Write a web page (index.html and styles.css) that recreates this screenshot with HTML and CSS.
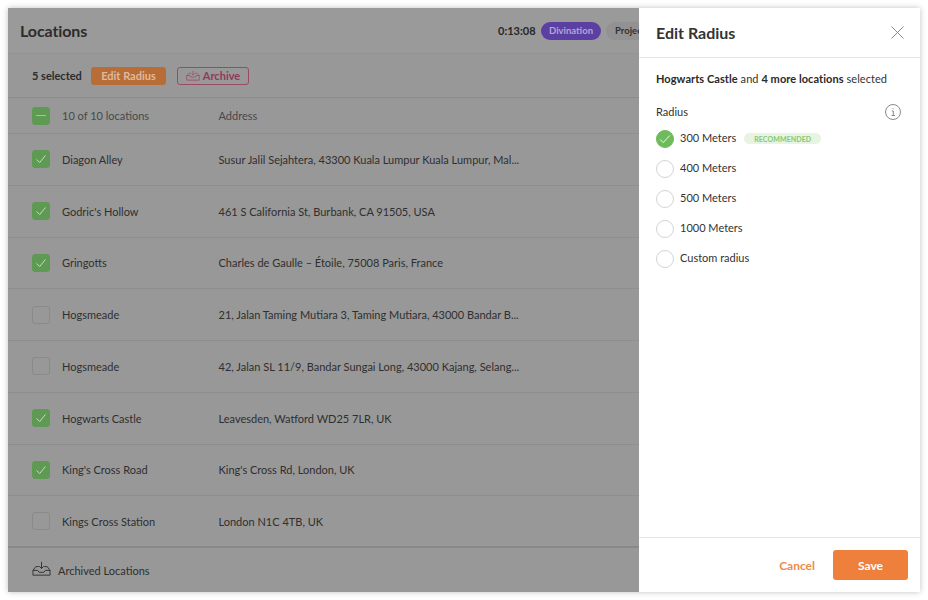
FILE: index.html
```html
<!DOCTYPE html>
<html lang="en">
<head>
<meta charset="utf-8">
<title>Locations</title>
<link rel="stylesheet" href="styles.css">
</head>
<body>
<div class="window">
  <main class="main">
    <header class="topbar">
      <h1 class="title">Locations</h1>
      <div class="topmeta">
        <span class="timer">0:13:08</span>
        <span class="pill pill-purple">Divination</span>
        <span class="pill pill-grey">Project</span>
      </div>
    </header>
    <div class="toolbar">
      <span class="sel-count">5 selected</span>
      <button class="btn-edit">Edit Radius</button>
      <button class="btn-archive">
        <svg class="ico-archive" viewBox="0 0 18 14" fill="none" stroke="#a8456a" stroke-width="1"><path d="M1 7 4 4h2M14 4h-2M17 7l-3-3M1 7v6h16V7M1 7h4l1 2h6l1-2h4M9 1v5M7 4.500l2 2 2-2"/></svg>
        Archive
      </button>
    </div>
    <div class="row row-head">
      <span class="check check-on"><span class="dash"></span></span>
      <span class="col-name">10 of 10 locations</span>
      <span class="col-addr">Address</span>
    </div>
    <div class="row"><span class="check check-on"><svg class="tick" viewBox="0 0 18 18" fill="none" stroke="#cfe3c8" stroke-width="1"><path d="M4 9.500 7.500 13 14 5"/></svg></span><span class="col-name">Diagon Alley</span><span class="col-addr">Susur Jalil Sejahtera, 43300 Kuala Lumpur Kuala Lumpur, Mal...</span></div>
    <div class="row"><span class="check check-on"><svg class="tick" viewBox="0 0 18 18" fill="none" stroke="#cfe3c8" stroke-width="1"><path d="M4 9.500 7.500 13 14 5"/></svg></span><span class="col-name">Godric's Hollow</span><span class="col-addr">461 S California St, Burbank, CA 91505, USA</span></div>
    <div class="row"><span class="check check-on"><svg class="tick" viewBox="0 0 18 18" fill="none" stroke="#cfe3c8" stroke-width="1"><path d="M4 9.500 7.500 13 14 5"/></svg></span><span class="col-name">Gringotts</span><span class="col-addr">Charles de Gaulle – Étoile, 75008 Paris, France</span></div>
    <div class="row"><span class="check"></span><span class="col-name">Hogsmeade</span><span class="col-addr">21, Jalan Taming Mutiara 3, Taming Mutiara, 43000 Bandar B...</span></div>
    <div class="row"><span class="check"></span><span class="col-name">Hogsmeade</span><span class="col-addr">42, Jalan SL 11/9, Bandar Sungai Long, 43000 Kajang, Selang...</span></div>
    <div class="row"><span class="check check-on"><svg class="tick" viewBox="0 0 18 18" fill="none" stroke="#cfe3c8" stroke-width="1"><path d="M4 9.500 7.500 13 14 5"/></svg></span><span class="col-name">Hogwarts Castle</span><span class="col-addr">Leavesden, Watford WD25 7LR, UK</span></div>
    <div class="row"><span class="check check-on"><svg class="tick" viewBox="0 0 18 18" fill="none" stroke="#cfe3c8" stroke-width="1"><path d="M4 9.500 7.500 13 14 5"/></svg></span><span class="col-name">King's Cross Road</span><span class="col-addr">King's Cross Rd, London, UK</span></div>
    <div class="row row-last"><span class="check"></span><span class="col-name">Kings Cross Station</span><span class="col-addr">London N1C 4TB, UK</span></div>
    <footer class="mainfoot">
      <svg class="ico-inbox" viewBox="0 0 20 16" fill="none" stroke="#333" stroke-width="1"><path d="M1 10v5h18v-5M1 10l3-4h3M19 10l-3-4h-3M1 10h5l1.500 2h5l1.500-2h5M10 1v7M7.500 5.500 10 8l2.500-2.500"/></svg>
      <span>Archived Locations</span>
    </footer>
  </main>
  <aside class="drawer">
    <header class="drawer-head">
      <h2 class="drawer-title">Edit Radius</h2>
      <svg class="ico-close" viewBox="0 0 14 14" fill="none" stroke="#808080" stroke-width="1"><path d="M.5.500l13 13M13.500.500l-13 13"/></svg>
    </header>
    <div class="drawer-body">
      <p class="summary"><b>Hogwarts Castle</b> and <b>4 more locations</b> selected</p>
      <div class="radius-head">
        <span class="opt-label">Radius</span>
        <svg class="ico-info" viewBox="0 0 16 16" fill="none" stroke="#8a8a8a" stroke-width="1"><circle cx="8" cy="8" r="7.500"/><path d="M6.800 7h1.500v4.500M6.500 11.500h3.500M8 4.200v1"/></svg>
      </div>
      <div class="opt"><span class="radio radio-on"><svg class="radio-tick" viewBox="0 0 18 18" fill="none" stroke="#fff" stroke-width="1"><path d="M3.500 9.500 7 13l7.500-8"/></svg></span><span class="opt-label">300 Meters</span><span class="tag">RECOMMENDED</span></div>
      <div class="opt"><span class="radio"></span><span class="opt-label">400 Meters</span></div>
      <div class="opt"><span class="radio"></span><span class="opt-label">500 Meters</span></div>
      <div class="opt"><span class="radio"></span><span class="opt-label">1000 Meters</span></div>
      <div class="opt"><span class="radio"></span><span class="opt-label">Custom radius</span></div>
    </div>
    <footer class="drawer-foot">
      <button class="btn-cancel">Cancel</button>
      <button class="btn-save">Save</button>
    </footer>
  </aside>
</div>
</body>
</html>
```

FILE: styles.css
```css
* { box-sizing: border-box; }
html, body { margin: 0; padding: 0; height: 100%; background: #fff; overflow: hidden; }
body { padding: 8px; font-family: Lato, "Noto Sans", sans-serif; color: #333; }
button { font-family: inherit; cursor: pointer; }
h1, h2, p { margin: 0; }

.window {
  display: flex;
  width: 912px;
  height: 584px;
  box-shadow: 0 0 6px rgba(0, 0, 0, .25);
  overflow: hidden;
}

.main {
  flex: 0 0 631px;
  width: 631px;
  background: #989898;
  display: flex;
  flex-direction: column;
  overflow: hidden;
}

.topbar {
  height: 46px;
  flex: none;
  display: flex;
  align-items: center;
  justify-content: space-between;
  padding: 0 0 0 12px;
  background: #9a9a9a;
  border-bottom: 1px solid #939393;
}
.title { font-size: 16px; font-weight: 700; color: #2c2c2c; letter-spacing: -.1px; }
.topmeta { display: flex; align-items: center; gap: 5px; width: 141px; flex: none; white-space: nowrap; font-weight: 700; }
.timer { color: #272727; font-size: 11px; width: 38px; flex: none; }
.pill { height: 18px; border-radius: 9px; display: inline-flex; align-items: center; padding: 0 9px; flex: none; font-size: 9.500px; }
.pill-purple { background: #5b3fa3; color: #b3a6d6; width: 60px; justify-content: center; padding: 0; }
.pill-grey { background: #929292; color: #333; }

.toolbar {
  height: 44px;
  flex: none;
  display: flex;
  align-items: center;
  padding-left: 24px;
  border-bottom: 1px solid #8c8c8c;
}
.sel-count { font-size: 11px; font-weight: 700; color: #2c2c2c; width: 59px; }
.btn-edit {
  width: 75px; height: 18px; padding: 0;
  border: 0; border-radius: 3px;
  background: #b96d36; color: #dfb99c;
  font-size: 11px; font-weight: 700;
}
.btn-archive {
  margin-left: 11px; width: 72px; height: 18px; padding: 0;
  display: flex; align-items: center; justify-content: center; gap: 3px;
  border: 1px solid #9a4a68; border-radius: 3px;
  background: transparent; color: #913a5c;
  font-size: 11px; font-weight: 700;
}
.ico-archive { width: 14px; height: 11px; flex: none; }

.row {
  height: 51.750px;
  flex: none;
  display: flex;
  align-items: center;
  padding-left: 24px;
  border-bottom: 1px solid #8e8e8e;
  font-size: 11px;
  color: #2f2f2f;
}
.row-head { height: 36px; color: #484848; }
.row-last { border-bottom-color: #888; border-bottom-width: 2px; }
.check {
  width: 18px; height: 18px; flex: none;
  border: 1px solid #8a8a8a; border-radius: 3px;
  display: flex; align-items: center; justify-content: center;
}
.check-on { background: #5f9a55; border-color: #5f9a55; }
.dash { width: 10px; height: 1px; background: #a5c59d; }
.tick { width: 18px; height: 18px; }
.col-name { margin-left: 12px; width: 156.500px; flex: none; }
.col-addr { white-space: nowrap; }

.mainfoot {
  flex: 1;
  display: flex;
  align-items: center;
  padding-left: 24px;
  gap: 7px;
  font-size: 11px;
  color: #2f2f2f;
}
.ico-inbox { width: 19px; height: 17px; flex: none; margin-top: -3px; }

.drawer {
  flex: 1;
  background: #fff;
  display: flex;
  flex-direction: column;
}
.drawer-head {
  height: 50px;
  flex: none;
  display: flex;
  align-items: center;
  justify-content: space-between;
  padding: 0 16px 0 17px;
  border-bottom: 1px solid #e6e6e6;
}
.drawer-title { font-size: 16px; font-weight: 700; color: #333; }
.ico-close { width: 13px; height: 13px; }
.drawer-body { flex: 1; padding: 14px 19px 0 17px; font-size: 11px; color: #333; }
.summary { height: 14px; line-height: 14px; margin-bottom: 18px; white-space: nowrap; letter-spacing: .06px; }
.summary b { font-weight: 700; color: #2a2a2a; }
.radius-head { display: flex; align-items: center; justify-content: space-between; height: 16px; margin-bottom: 3.500px; }
.ico-info { width: 16px; height: 16px; }
.opt { display: flex; align-items: center; height: 30px; white-space: nowrap; }
.opt-label { padding-bottom: 2px; }
.radio {
  width: 18px; height: 18px; flex: none; margin-right: 6px;
  border: 1px solid #d4d4d4; border-radius: 50%;
}
.radio-on { background: #6fbb5b; border-color: #6fbb5b; display: flex; align-items: center; justify-content: center; }
.radio-tick { width: 16px; height: 16px; flex: none; }
.tag {
  margin-left: 8px; height: 11px; width: 77px;
  display: inline-flex; align-items: center; justify-content: center;
  background: #e6f4e1; color: #85c973; border-radius: 6px;
  font-size: 7px; font-weight: 700; letter-spacing: .1px;
}

.drawer-foot {
  height: 55px;
  flex: none;
  display: flex;
  align-items: center;
  justify-content: flex-end;
  padding-right: 12px;
  border-top: 1px solid #e6e6e6;
}
.btn-cancel {
  border: 0; background: transparent; padding: 0; margin-right: 18px;
  color: #ee8b4b; font-size: 12px; font-weight: 700;
}
.btn-save {
  width: 75px; height: 30px; padding: 0; border: 0; border-radius: 3px;
  background: #ee803c; color: #fff; font-size: 12px; font-weight: 700;
}
```
